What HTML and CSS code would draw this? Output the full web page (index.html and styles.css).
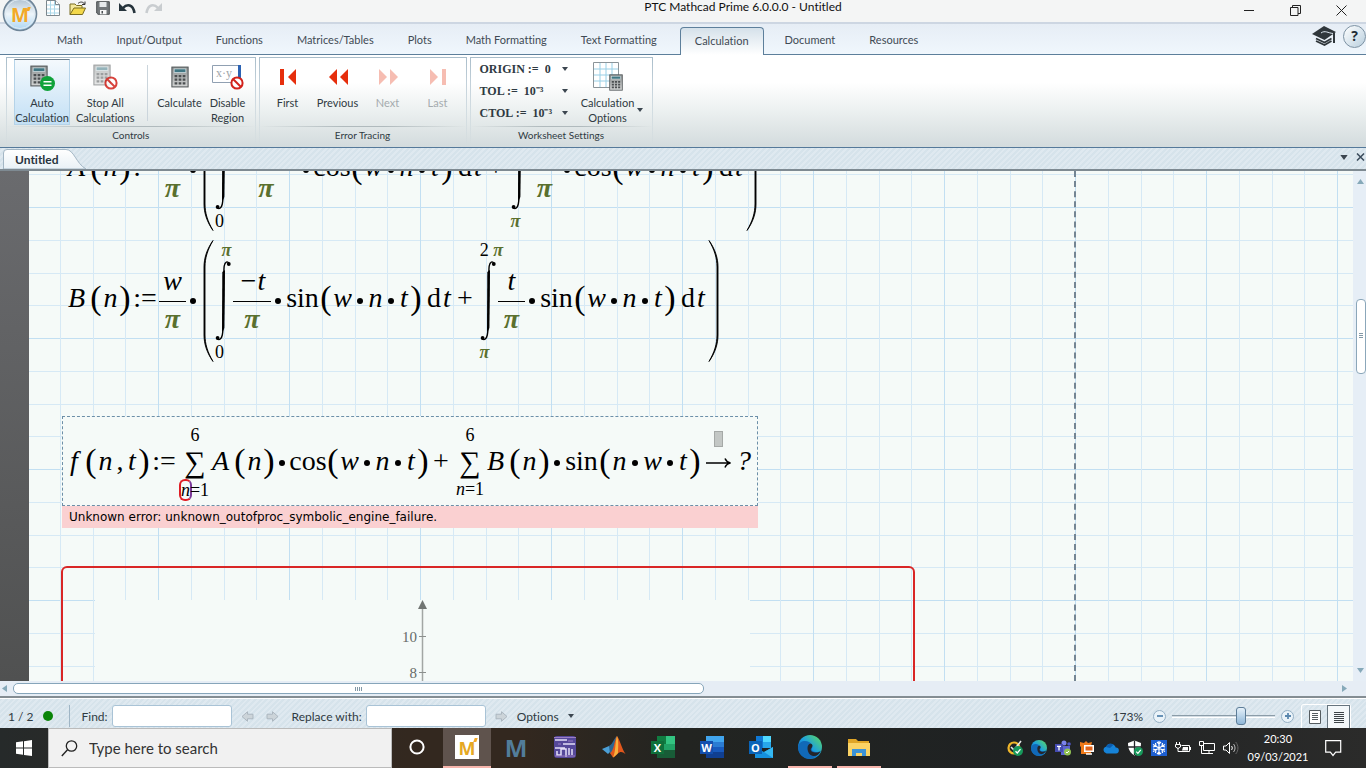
FILE: index.html
```html
<!DOCTYPE html>
<html lang="en">
<head>
    <meta charset="UTF-8">
    <meta name="viewport" content="width=device-width, initial-scale=1.0">
    <title>PTC Mathcad Prime 6.0.0.0 - Untitled</title>
    <link rel="stylesheet" href="styles.css">
</head>
<body>

    <!-- Shared symbols -->
    <svg class="defs" width="0" height="0" aria-hidden="true">
        <defs>
            <linearGradient id="calcFill" x1="0" y1="0" x2="0" y2="1"><stop offset="0" stop-color="#8d9191"/><stop offset="1" stop-color="#d3d5d5"/></linearGradient>
            <linearGradient id="edgeFill" x1="0" y1="1" x2="1" y2="0"><stop offset="0" stop-color="#0c59a4"/><stop offset=".5" stop-color="#1b9de2"/><stop offset="1" stop-color="#5fdf5a"/></linearGradient>
            <linearGradient id="orb" x1="0" y1="0" x2="0" y2="1"><stop offset="0" stop-color="#a9bccd"/><stop offset=".5" stop-color="#eef5fa"/><stop offset="1" stop-color="#a8d4f3"/></linearGradient>
            <linearGradient id="tabFill" x1="0" y1="0" x2="0" y2="1"><stop offset="0" stop-color="#ffffff"/><stop offset="1" stop-color="#e9f1f6"/></linearGradient>
        </defs>
        <symbol id="calc" viewBox="0 0 20 24">
            <rect x="1" y="1" width="18" height="22" fill="url(#calcFill)" stroke="#555a5c" stroke-width="1.2"/>
            <rect x="3.5" y="3" width="13" height="4" fill="#3f7683" stroke="#d8e3e5" stroke-width=".8"/>
            <path d="M4 11h3M8.500 11h3M13 11h3M4 15h3M8.500 15h3M13 15h3M4 19h3M8.500 19h3M13 19h3" stroke="#4b4f51" stroke-width="2.400"/>
        </symbol>
        <symbol id="ban" viewBox="0 0 14 14">
            <circle cx="7" cy="7" r="5.600" fill="#fff" stroke="#d2231c" stroke-width="2"/>
            <path d="M3 3l8 8" stroke="#d2231c" stroke-width="2"/>
        </symbol>
        <symbol id="edge" viewBox="0 0 24 24">
            <circle cx="12" cy="12" r="12" fill="url(#edgeFill)"/>
            <path d="M0 12C1 6 7 5 11 7c3 1.500 4 4 3 6.500-1 2 1 3.500 4 3.500 2 0 4-.5 5-1.500C20 22 14 24.500 9 23.500 3 22 0 17 0 12z" fill="#1169b8"/>
            <path d="M9.500 13c0-3 2-5 4-4 2 1.500.5 3-.5 4.500-1 2 1 3.800 4 4 3 .2 5-.5 6-2-2 4.500-5 6-8 5.500-3.500-.8-5.500-4-5.500-8z" fill="#24252a"/>
        </symbol>
        <symbol id="caret" viewBox="0 0 6 4"><path d="M0 0h6L3 4z" fill="#3c4650"/></symbol>
        <symbol id="arrow" viewBox="0 0 14 12"><path d="M1 3.500h6V.8L13 6l-6 5.200V8.500H1z" fill="#ccd4d9" stroke="#a9b4bc"/></symbol>
        <symbol id="tick" viewBox="0 0 10 10"><circle cx="5" cy="5" r="5" fill="#17985b"/><path d="M2.500 5.200l1.800 1.800 3.200-3.800" fill="none" stroke="#fff" stroke-width="1.300"/></symbol>
        <symbol id="integral" viewBox="0 0 16 82">
            <path d="M14 3.500C12.500.8 10 1.500 9.200 6 8.400 11 8.900 28 8.500 44c-.3 14 .2 25-1.200 31-.8 4-3 5.500-4.800 4" fill="none" stroke="#000" stroke-width="1.400"/>
            <path d="M10 10L9.400 68l-2.400 5L7.300 12z"/>
            <circle cx="13.800" cy="4" r="1.900"/><circle cx="2.600" cy="78" r="1.900"/>
        </symbol>
        <symbol id="bigparen" viewBox="0 0 12 122"><path d="M10 .5C4.500 10 2 18 2 27v68c0 9 2.500 17 8 26.500C4 113 1 104 1 95V27C1 18 4 9 10 .5z" fill="#000" stroke="#000" stroke-width=".9"/></symbol>
        <symbol id="bigparen-r" viewBox="0 0 12 122"><path d="M2 .5c5.500 9.500 8 17.500 8 26.500v68c0 9-2.500 17-8 26.500 6-8.500 9-17.500 9-26.500V27C11 18 8 9 2 .5z" fill="#000" stroke="#000" stroke-width=".9"/></symbol>
    </svg>

    <div class="app">

        <header class="titlebar">
            <button class="orb-btn" aria-label="Mathcad menu">
                <svg width="36" height="36" viewBox="0 0 36 36"><circle cx="18" cy="18" r="16.500" fill="url(#orb)" stroke="#6f8598" stroke-width="1.600"/><circle cx="18" cy="18" r="14.500" fill="none" stroke="#dfeaf2"/></svg>
                <span class="orb-m">M</span>
            </button>
            <div class="quick">
                <button aria-label="New"><svg width="14" height="16" viewBox="0 0 14 16"><path d="M.5.5h9l4 4v11H.5z" fill="#fff" stroke="#7d878d"/><path d="M1 5h12M1 9h12M1 13h12M4.500 1v14M8.500 1v14" stroke="#a9d6e8"/><path d="M9.500.5v4h4" fill="#fff" stroke="#7d878d"/></svg></button>
                <button aria-label="Open"><svg width="18" height="15" viewBox="0 0 18 15"><path d="M1 13.500V3h5l1.500 1.500H13V7" fill="#f5e99b" stroke="#7a6c20"/><path d="M1 13.500L5 7h11.500l-3 6.500z" fill="#f3d84b" stroke="#7a6c20"/><path d="M9 2.500c2-2 5-2 6.500.5M16 .5v3h-3" fill="none" stroke="#333"/></svg></button>
                <button aria-label="Save"><svg width="14" height="14" viewBox="0 0 14 14"><path d="M.7.7h12.600v12.600H2L.7 12z" fill="#73787b" stroke="#4a4f52"/><path d="M3.500 1h7v5h-7z" fill="#e7eaec"/><path d="M4 9h6.500v4.300H4z" fill="#f6f7f7"/><path d="M5.500 10h1.500v2.500H5.500z" fill="#4a4f52"/></svg></button>
                <button aria-label="Undo"><svg width="17" height="12" viewBox="0 0 17 12"><path d="M4 6c4-4.500 10-4 11.500 5" fill="none" stroke="#26343c" stroke-width="2.600"/><path d="M0 1v8h8z" fill="#26343c"/></svg></button>
                <button aria-label="Redo"><svg width="17" height="12" viewBox="0 0 17 12"><path d="M13 6C9 1.500 3 2 1.500 11" fill="none" stroke="#c9cdd0" stroke-width="2.600"/><path d="M17 1v8H9z" fill="#c9cdd0"/></svg></button>
            </div>
            <div class="app-title">PTC Mathcad Prime 6.0.0.0 - Untitled</div>
            <div class="window-btns">
                <button aria-label="Minimize"><svg width="11" height="11" viewBox="0 0 11 11"><path d="M0 5.500h10" stroke="#222"/></svg></button>
                <button aria-label="Restore"><svg width="11" height="11" viewBox="0 0 11 11"><path d="M.5 2.500h7.500v8H.5zM2.500 2.500v-2h8v8H8" fill="none" stroke="#222"/></svg></button>
                <button aria-label="Close"><svg width="11" height="11" viewBox="0 0 11 11"><path d="M.5.5l10 10M10.500.5l-10 10" stroke="#222"/></svg></button>
            </div>
        </header>

        <nav class="tabs">
            <button>Math</button>
            <button>Input/Output</button>
            <button>Functions</button>
            <button>Matrices/Tables</button>
            <button>Plots</button>
            <button>Math Formatting</button>
            <button>Text Formatting</button>
            <button class="active">Calculation</button>
            <button>Document</button>
            <button>Resources</button>
            <div class="tabs-right">
                <button class="icon-btn" aria-label="Learning"><svg width="26" height="20" viewBox="0 0 26 20"><path d="M13 0l12 6-11.500 8L1 8z" fill="#30373b"/><path d="M10 7c4-3 7 0 12 .5" fill="none" stroke="#dfe9f2"/><path d="M5 12.500l8.500 4 7-4M5 15l8.500 4 7-4" fill="none" stroke="#30373b" stroke-width="1.800"/><path d="M23 7v10" stroke="#30373b" stroke-width="2"/></svg></button>
                <button class="help" aria-label="Help">?</button>
            </div>
        </nav>

        <section class="ribbon">
            <div class="group">
                <div class="group-items">
                    <button class="tool pressed">
                        <span class="pic"><svg width="26" height="28" viewBox="0 0 26 28"><use href="#calc" x="1" y="0" width="18" height="24"/><circle cx="18.500" cy="19.500" r="7.500" fill="#10a23a"/><path d="M14.500 17.800h8M14.500 21.300h8" stroke="#fff" stroke-width="1.500"/></svg></span>
                        Auto<br>Calculation
                    </button>
                    <button class="tool">
                        <span class="pic"><svg width="26" height="28" viewBox="0 0 26 28"><g opacity=".55"><use href="#calc" x="1" y="0" width="18" height="24"/></g><g opacity=".85"><use href="#ban" x="12" y="13" width="14" height="14"/></g></svg></span>
                        Stop All<br>Calculations
                    </button>
                    <span class="divider"></span>
                    <button class="tool">
                        <span class="pic"><svg width="20" height="28" viewBox="0 0 20 28"><use href="#calc" x="1" y="2" width="18" height="24"/></svg></span>
                        Calculate
                    </button>
                    <button class="tool">
                        <span class="pic"><svg width="34" height="28" viewBox="0 0 34 28"><path d="M1.500 2.500h26v17h-26z" fill="#fff" stroke="#90a0b2"/><path d="M27 2h3v18h-3z" fill="#2c63b4"/><text x="5" y="14" font-size="12" fill="#a0a6aa" font-family="Liberation Serif">x·y</text><use href="#ban" x="19" y="13" width="14" height="14"/></svg></span>
                        Disable<br>Region
                    </button>
                </div>
                <div class="group-name">Controls</div>
            </div>

            <div class="group">
                <div class="group-items tracing">
                    <button class="tool"><span class="pic"><svg width="18" height="16" viewBox="0 0 18 16"><path d="M1 0h4v16H1zM17 0v16L9 8z" fill="#e62e0c"/></svg></span>First</button>
                    <button class="tool"><span class="pic"><svg width="20" height="16" viewBox="0 0 20 16"><path d="M9 0v16L1 8zM20 0v16l-8-8z" fill="#e62e0c"/></svg></span>Previous</button>
                    <button class="tool" disabled><span class="pic"><svg width="20" height="16" viewBox="0 0 20 16"><path d="M1 0v16l8-8zM12 0v16l8-8z" fill="#f6bdb2"/></svg></span>Next</button>
                    <button class="tool" disabled><span class="pic"><svg width="18" height="16" viewBox="0 0 18 16"><path d="M1 0v16l8-8zM13 0h4v16h-4z" fill="#f6bdb2"/></svg></span>Last</button>
                </div>
                <div class="group-name">Error Tracing</div>
            </div>

            <div class="group">
                <div class="group-items worksheet">
                    <div class="settings">
                        <div class="setting"><label for="origin">ORIGIN :=</label><select id="origin"><option>0</option></select><svg width="6" height="4"><use href="#caret"/></svg></div>
                        <div class="setting"><label for="tol">TOL :=</label><select id="tol"><option>10⁻³</option></select><svg width="6" height="4"><use href="#caret"/></svg></div>
                        <div class="setting"><label for="ctol">CTOL :=</label><select id="ctol"><option>10⁻³</option></select><svg width="6" height="4"><use href="#caret"/></svg></div>
                    </div>
                    <button class="tool options">
                        <span class="pic"><svg width="30" height="30" viewBox="0 0 30 30"><path d="M.5.5h25v25H.5z" fill="#fff" stroke="#8b9499"/><path d="M1 7h24M1 13h24M1 19h24M7 1v24M13 1v24M19 1v24" stroke="#98cfe6"/><use href="#calc" x="16" y="12" width="14" height="17"/></svg></span>
                        Calculation<br>Options
                        <svg class="drop" width="6" height="4"><use href="#caret"/></svg>
                    </button>
                </div>
                <div class="group-name">Worksheet Settings</div>
            </div>
        </section>

        <div class="docbar">
            <button class="doctab"><svg width="84" height="20" viewBox="0 0 84 20"><path d="M.5 20V4Q.5.5 4 .5h59c8 0 10 14 20 19.500z" fill="url(#tabFill)" stroke="#a3b6c4"/></svg><span>Untitled</span></button>
            <div class="docbar-btns">
                <button aria-label="Documents"><svg width="8" height="5" viewBox="0 0 6 4"><use href="#caret"/></svg></button>
                <button aria-label="Close document"><svg width="9" height="8" viewBox="0 0 9 8"><path d="M1 .5l7 7M8 .5l-7 7" stroke="#3c4c5c" stroke-width="1.500"/></svg></button>
            </div>
        </div>

        <main class="workspace">
            <div class="sheet">

                <!-- A(n) -->
                <div class="region region-a">
                    <div class="expr">
                        <i class="cap">A</i><b class="par">(</b><i class="n">n</i><b class="par">)</b><b class="def">:=</b>
                        <span class="frac"><span class="num"></span><i class="den pi">π</i></span>
                        <span class="dot"></span>
                        <svg class="open-par" width="12" height="122"><use href="#bigparen"/></svg>
                        <span class="int"><span class="lim up"></span><svg width="16" height="82"><use href="#integral"/></svg><span class="lim low">0</span></span>
                        <span class="frac wide"><span class="num"></span><i class="den pi">π</i></span>
                        <span class="dot"></span><b class="fn cos">cos</b><b class="par">(</b><i class="w">w</i><span class="dot"></span><i class="n">n</i><span class="dot"></span><i class="t">t</i><b class="par">)</b><b class="d">d</b><i class="dt">t</i><b class="plus">+</b>
                        <span class="int"><span class="lim up"></span><svg width="16" height="82"><use href="#integral"/></svg><i class="lim low pi">π</i></span>
                        <span class="frac mid"><span class="num"></span><i class="den pi">π</i></span>
                        <span class="dot"></span><b class="fn cos">cos</b><b class="par">(</b><i class="w">w</i><span class="dot"></span><i class="n">n</i><span class="dot"></span><i class="t">t</i><b class="par">)</b><b class="d">d</b><i class="dt">t</i>
                        <svg width="12" height="122"><use href="#bigparen-r"/></svg>
                    </div>
                </div>

                <!-- B(n) -->
                <div class="region region-b">
                    <div class="expr">
                        <i class="cap">B</i><b class="par">(</b><i class="n">n</i><b class="par">)</b><b class="def">:=</b>
                        <span class="frac"><i class="num">w</i><i class="den pi">π</i></span>
                        <span class="dot"></span>
                        <svg class="open-par" width="12" height="122"><use href="#bigparen"/></svg>
                        <span class="int"><i class="lim up pi">π</i><svg width="16" height="82"><use href="#integral"/></svg><span class="lim low">0</span></span>
                        <span class="frac neg"><i class="num">−t</i><i class="den pi">π</i></span>
                        <span class="dot"></span><b class="fn">sin</b><b class="par">(</b><i class="w">w</i><span class="dot"></span><i class="n">n</i><span class="dot"></span><i class="t">t</i><b class="par">)</b><b class="d">d</b><i class="dt">t</i><b class="plus">+</b>
                        <span class="int"><span class="lim up">2 <i class="pi">π</i></span><svg width="16" height="82"><use href="#integral"/></svg><i class="lim low pi">π</i></span>
                        <span class="frac"><i class="num">t</i><i class="den pi">π</i></span>
                        <span class="dot"></span><b class="fn">sin</b><b class="par">(</b><i class="w">w</i><span class="dot"></span><i class="n">n</i><span class="dot"></span><i class="t">t</i><b class="par">)</b><b class="d">d</b><i class="dt">t</i>
                        <svg width="12" height="122"><use href="#bigparen-r"/></svg>
                    </div>
                </div>

                <!-- f(n,t) with its error -->
                <div class="region region-f">
                    <div class="expr selected">
                        <i class="f">f</i><b class="par">(</b><i class="n">n</i><b class="comma">,</b><i class="t">t</i><b class="par">)</b><b class="def">:=</b>
                        <span class="sum"><span class="lim">6</span><b class="sigma">∑</b><span class="lim"><i class="bad">n</i>=1</span></span>
                        <i class="cap">A</i><b class="par">(</b><i class="n">n</i><b class="par">)</b><span class="dot"></span><b class="fn cos">cos</b><b class="par">(</b><i class="w">w</i><span class="dot"></span><i class="n">n</i><span class="dot"></span><i class="t">t</i><b class="par">)</b><b class="plus">+</b>
                        <span class="sum"><span class="lim">6</span><b class="sigma">∑</b><span class="lim"><i>n</i>=1</span></span>
                        <i class="cap">B</i><b class="par">(</b><i class="n">n</i><b class="par">)</b><span class="dot"></span><b class="fn">sin</b><b class="par">(</b><i class="n">n</i><span class="dot"></span><i class="w">w</i><span class="dot"></span><i class="t">t</i><b class="par">)</b>
                        <span class="eval"><span class="placeholder"></span><svg width="26" height="12" viewBox="0 0 26 12"><path d="M0 6h24M19 1.500c1 2.500 3 4 5.500 4.500-2.500.5-4.500 2-5.500 4.500" fill="none" stroke="#000" stroke-width="1.500"/></svg></span>
                        <i class="t">?</i>
                    </div>
                    <div class="error">Unknown error: unknown_outofproc_symbolic_engine_failure.</div>
                </div>

                <!-- Plot -->
                <div class="region plot">
                    <div class="plot-area">
                        <div class="ticks"><span>10</span><span>8</span></div>
                        <svg width="12" height="82" viewBox="0 0 12 82"><path d="M5.500 8v74" stroke="#a2a6a4" stroke-width="1.500"/><path d="M5.500 0L10 9H1z" fill="#717573"/><path d="M2 36.500h7M2 72.500h7" stroke="#8b8f8d"/></svg>
                    </div>
                </div>

                <div class="margin-line"></div>
            </div>
            <div class="vscroll">
                <svg width="7" height="5" viewBox="0 0 7 5"><path d="M0 5h7L3.500 0z" fill="#86a9b9"/></svg>
                <div class="vthumb"><svg width="4" height="6" viewBox="0 0 4 6"><path d="M0 .5h4M0 2.500h4M0 4.500h4" stroke="#8298a6"/></svg></div>
                <svg width="7" height="5" viewBox="0 0 7 5"><path d="M0 0h7L3.500 5z" fill="#86a9b9"/></svg>
            </div>
        </main>

        <div class="hscroll">
            <svg width="5" height="7" viewBox="0 0 5 7"><path d="M5 0v7L0 3.500z" fill="#86a9b9"/></svg>
            <div class="htrack"><div class="hthumb"><svg width="8" height="4" viewBox="0 0 8 4"><path d="M.5 0v4M2.500 0v4M4.500 0v4M6.500 0v4" stroke="#8298a6"/></svg></div></div>
            <svg width="5" height="7" viewBox="0 0 5 7"><path d="M0 0v7l5-3.500z" fill="#86a9b9"/></svg>
        </div>

        <footer class="statusbar">
            <span class="pages">1 / 2</span>
            <span class="led"></span>
            <span class="sep"></span>
            <label for="find">Find:</label>
            <input type="text" id="find">
            <button class="prev" aria-label="Find previous"><svg width="13" height="11"><use href="#arrow"/></svg></button>
            <button aria-label="Find next"><svg width="13" height="11"><use href="#arrow"/></svg></button>
            <label for="replace">Replace with:</label>
            <input type="text" id="replace">
            <button aria-label="Replace"><svg width="13" height="11"><use href="#arrow"/></svg></button>
            <button class="find-options">Options <svg width="6" height="4"><use href="#caret"/></svg></button>
            <div class="zoom">
                <label for="zoom">173%</label>
                <button class="round" aria-label="Zoom out"><svg width="8" height="8" viewBox="0 0 8 8"><path d="M1 4h6" stroke="#5a87ae" stroke-width="1.800"/></svg></button>
                <input type="range" id="zoom" min="0" max="100" value="69">
                <button class="round" aria-label="Zoom in"><svg width="8" height="8" viewBox="0 0 8 8"><path d="M1 4h6M4 1v6" stroke="#5a87ae" stroke-width="1.800"/></svg></button>
            </div>
            <div class="views">
                <button aria-label="Page view"><svg width="12" height="14" viewBox="0 0 12 14"><path d="M.5.5h11v13H.5z" fill="#fff" stroke="#555c60"/><path d="M3 3.500h6M3 5.500h6M3 7.500h6M3 9.500h6" stroke="#555c60"/></svg></button>
                <button class="on" aria-label="Draft view"><svg width="12" height="13" viewBox="0 0 12 13"><path d="M1 1.500h10M1 3.500h10M1 5.500h10M1 7.500h10M1 9.500h10M1 11.500h10" stroke="#3e4448"/></svg></button>
            </div>
        </footer>

        <div class="taskbar">
            <button class="start" aria-label="Start"><svg width="16" height="16" viewBox="0 0 16 16"><path d="M0 2.300L7 1.300V7.600H0zM8 1.200L16 0v7.600H8zM0 8.500h7v6.300l-7-1zM8 8.500h8V16l-8-1.100z" fill="#fff"/></svg></button>
            <div class="search">
                <svg width="17" height="17" viewBox="0 0 17 17"><circle cx="10.500" cy="6" r="5.200" fill="none" stroke="#222" stroke-width="1.300"/><path d="M6.500 9.800L.8 16" stroke="#222" stroke-width="1.400"/></svg>
                <input type="text" aria-label="Search" placeholder="Type here to search">
            </div>
            <div class="apps">
                <button class="cortana" aria-label="Cortana"><svg width="18" height="18" viewBox="0 0 18 18"><circle cx="9" cy="9" r="6.600" fill="none" stroke="#fff" stroke-width="2"/></svg></button>
                <button class="current" aria-label="Mathcad Prime"><span class="mc">M</span></button>
                <button aria-label="Mathcad"><span class="mc dark">M</span></button>
                <button aria-label="Circuit simulator"><svg width="22" height="22" viewBox="0 0 22 22"><rect width="22" height="22" rx="3" fill="#55489a"/><path d="M1 4h12M9 8h12M1 12h10M3 15v4h4v-6h5v8M15 12v7M18 13v6" fill="none" stroke="#e4def8" stroke-width="1.500"/><path d="M0 1.500h22M14 5h5M4 8h3M1 20h20" stroke="#9b7dc4"/></svg></button>
                <button aria-label="MATLAB"><svg width="24" height="22" viewBox="0 0 24 22"><path d="M0 13l7-3 3 4-4 4z" fill="#4b9fd6"/><path d="M7 10c4-2 5-8 8-10l-4 15-3 3z" fill="#2b6592"/><path d="M15 0c3 4 5 13 8.500 18-3-2-5-3-8 0-2 2-3 3-4.500 3.500L8 17c4-2 4-12 7-17z" fill="#e2571c"/><path d="M15 0c2 5 1 13 1 17-2 2-3.500 4-5 4.500C14 15 13 6 15 0z" fill="#f7b13c"/></svg></button>
                <button aria-label="Excel"><svg class="office" width="24" height="22" viewBox="0 0 24 22"><path d="M6 0h18v22H6z" fill="#21a366"/><path d="M6 0h9v8H6z" fill="#107c41"/><path d="M15 0h9v8h-9z" fill="#33c481"/><path d="M6 14h18v8H6z" fill="#185c37"/><path d="M0 5h13v13H0z" fill="#0f703b"/><text x="6.500" y="15.500" text-anchor="middle">X</text></svg></button>
                <button aria-label="Word"><svg class="office" width="24" height="22" viewBox="0 0 24 22"><path d="M6 0h18v6H6z" fill="#41a5ee"/><path d="M6 6h18v6H6z" fill="#2b7cd3"/><path d="M6 11h18v6H6z" fill="#185abd"/><path d="M6 16h18v6H6z" fill="#103f91"/><path d="M0 5h13v13H0z" fill="#144fae"/><text x="6.500" y="15.500" text-anchor="middle">W</text></svg></button>
                <button aria-label="Outlook"><svg class="office" width="24" height="22" viewBox="0 0 24 22"><path d="M7 0h15v12H7z" fill="#0f78d4"/><path d="M14 0h8v7h-8z" fill="#50d9ff"/><path d="M14 6h8v6h-8z" fill="#28a8ea"/><path d="M6 11l9 5 9-5v11H6z" fill="#1490df"/><path d="M15 16l9-5v11z" fill="#35b8f1"/><path d="M0 5h13v13H0z" fill="#0a64b8"/><text x="6.500" y="15.500" text-anchor="middle">O</text></svg></button>
                <button class="open" aria-label="Edge"><svg width="24" height="24"><use href="#edge"/></svg></button>
                <button class="open" aria-label="File Explorer"><svg width="22" height="19" viewBox="0 0 22 19"><path d="M0 1h8l2 2h11v5H0z" fill="#e0a526"/><path d="M0 5h22v13H0z" fill="#fbd365"/><path d="M4 18v-7h14v7h-4v-3H8v3z" fill="#3d93d6"/></svg></button>
            </div>
            <div class="tray">
                <svg width="16" height="16" viewBox="0 0 16 16"><circle cx="7" cy="8" r="5.500" fill="none" stroke="#f0b72a" stroke-width="2.200"/><path d="M4 7l3 3 7-9" fill="none" stroke="#e9e9e9" stroke-width="1.600"/><use href="#tick" x="6" y="6" width="10" height="10"/></svg>
                <svg width="16" height="16"><use href="#edge"/></svg>
                <svg width="16" height="16" viewBox="0 0 16 16"><circle cx="9" cy="3" r="2.500" fill="#7b83eb"/><circle cx="14" cy="4" r="1.800" fill="#5059c9"/><path d="M6 6h9v6l-3 3H6z" fill="#5c64cf"/><path d="M0 4h8v8H0z" fill="#444bb0"/><path d="M2 6.300h4M4 6v4.500" stroke="#fff" stroke-width="1.300"/><circle cx="12.500" cy="12" r="3.500" fill="#92c353"/><path d="M11 12l1 1 2-2" fill="none" stroke="#fff"/></svg>
                <svg width="16" height="16" viewBox="0 0 16 16"><path d="M1 2l4 1 2-2 2 2 4-1-1 4v8H2V7L1 6z" fill="#ef7a1a"/><path d="M5 5h10v7H5z" fill="#fff"/><path d="M6.500 6.500h7v4h-7z" fill="#e2641b"/><path d="M7 14h6" stroke="#fff" stroke-width="1.500"/></svg>
                <svg width="16" height="16" viewBox="0 0 16 16"><path d="M3.500 13.500a3.500 3.500 0 0 1-.5-6.800A5 5 0 0 1 11 5c1 .8 1.500 1.600 1.700 2.500a3 3 0 0 1 .3 6z" fill="#1683d8"/><path d="M3 7c1-3 4.500-4.500 7.500-2.300L7 8z" fill="#0a5cae"/></svg>
                <svg width="16" height="16" viewBox="0 0 16 16"><path d="M7.500.5L14 3c0 6-2 10-6.500 12.500C3 13 1 9 1 3z" fill="#fff"/><path d="M7.500.5V15M1 7h13" stroke="#24262a" stroke-width="1.300"/><use href="#tick" x="7" y="7" width="9" height="9"/></svg>
                <svg width="16" height="16" viewBox="0 0 16 16"><path d="M0 0h16v16H0z" fill="#1d5fd1"/><path d="M8 1v14M2 4.500l12 7M14 4.500l-12 7M6 2l2 2 2-2M6 14l2-2 2 2M2 7l3-1-.5-3M14 9l-3 1 .5 3M2 9l3 1-.5 3M14 7l-3-1 .5-3" fill="none" stroke="#fff" stroke-width="1.200"/></svg>
                <svg width="16" height="14" viewBox="0 0 16 14"><path d="M6.500 4.500h8v6h-9M15.500 6v3" fill="none" stroke="#fff"/><path d="M8 6h5v3.500H7z" fill="#fff"/><path d="M1.500 1v2M4.500 1v2M.5 3.500h5v2.500L3 7.500.5 6zM3 7v3.500h3" fill="none" stroke="#fff"/></svg>
                <svg width="16" height="14" viewBox="0 0 16 14"><path d="M4.500 2.500h11v7h-11zM10 9.500v3M6 12.500h8M.5.500h4v4h-4zM2.500 4.500v8h4" fill="none" stroke="#fff"/></svg>
                <svg width="16" height="14" viewBox="0 0 16 14"><path d="M.5 5h2.500l3.500-3.500v11L3 9H.5z" fill="none" stroke="#fff"/><path d="M8.500 5c1 1.200 1 2.800 0 4" fill="none" stroke="#fff"/><path d="M10.500 3c2 2.500 2 5.500 0 8" fill="none" stroke="#bbb"/><path d="M12.700 1c3 3.500 3 8.500 0 12" fill="none" stroke="#666"/></svg>
            </div>
            <div class="clock"><span>20:30</span><span>09/03/2021</span></div>
            <button class="notify" aria-label="Notifications"><svg width="17" height="17" viewBox="0 0 17 17"><path d="M.7.7h15v11.500h-5L8 15.500l-2.700-3.300H.7z" fill="none" stroke="#fff" stroke-width="1.200"/></svg></button>
        </div>
    </div>

</body>
</html>
```
FILE: styles.css
```css
* {
    box-sizing: border-box;
}
body {
    margin: 0;
    font-family: Lato, "Open Sans", sans-serif;
    font-size: 12px;
    font-variant-ligatures: none;
    color: #2f3a42;
}
button {
    border: none;
    background: none;
    padding: 0;
    margin: 0;
    font: inherit;
    color: inherit;
}
svg {
    display: block;
    flex-shrink: 0;
}
.defs {
    position: absolute;
}
.app {
    display: flex;
    flex-direction: column;
    height: 100vh;
    overflow: hidden;
    background: #dbe6ee;
}

/* Title bar */
.titlebar {
    position: relative;
    display: flex;
    flex-shrink: 0;
    align-items: flex-start;
    justify-content: space-between;
    height: 24px;
    background: #f4f5f5;
    border-bottom: 2px solid #cdd6e2;
}
.orb-btn {
    position: absolute;
    left: 2px;
    top: -4px;
    z-index: 2;
}
.orb-m {
    position: absolute;
    left: 9px;
    top: 9px;
    font: bold 19px/20px "Open Sans", sans-serif;
    color: #f3a928;
}
/* apostrophe mark of the M logo */
.orb-m::after,
.mc::after {
    content: "";
    position: absolute;
    right: -1px;
    top: 2px;
    width: 3px;
    height: 4px;
    background: #f3a928;
    transform: skewX(-20deg);
}
.quick {
    display: flex;
    align-items: center;
    gap: 9px;
    height: 16px;
    padding-left: 46px;
}
.app-title {
    position: absolute;
    left: 0;
    right: 0;
    padding-left: 120px;
    text-align: center;
    line-height: 14px;
    color: #111;
}
.window-btns {
    display: flex;
    gap: 35px;
    padding: 5px 19px 0 0;
}

/* Ribbon tabs */
.tabs {
    display: flex;
    flex-shrink: 0;
    align-items: flex-end;
    height: 31px;
    padding-left: 40px;
    background: linear-gradient(#e6edf5, #f0f7fd);
    border-bottom: 1px solid #5d7f9b;
    font-size: 11px;
    color: #3f4a54;
}
.tabs > button {
    height: 28px;
    padding: 0 16px 2px;
    border: 1px solid transparent;
    border-bottom: none;
    border-radius: 4px 4px 0 0;
}
.tabs .active {
    margin: 0 4px -1px 6px;
    padding: 0 14px 2px;
    border-color: #5d7f9b;
    background: linear-gradient(#d5e1ea, #fff);
}
.tabs-right {
    display: flex;
    align-items: center;
    gap: 6px;
    height: 30px;
    margin-left: auto;
    padding-bottom: 6px;
}
.help {
    width: 23px;
    height: 23px;
    border: 1px solid #7d92a3;
    border-radius: 50%;
    background: linear-gradient(135deg, #fff, #b9cfde);
    font: bold 14px/20px "Open Sans", sans-serif;
    color: #222c35;
}

/* Ribbon */
.ribbon {
    display: flex;
    flex-shrink: 0;
    gap: 3px;
    height: 93px;
    padding: 2px 6px 3px;
    background: linear-gradient(#fff 30%, #e9eeee 65%, #d3dbdd);
    border-bottom: 1px solid #55799a;
    font-size: 11px;
}
.group {
    display: flex;
    flex-direction: column;
    border: 1px solid #b9c7d1;
    border-bottom: none;
    border-image: linear-gradient(#a9bdca, transparent) 1;
}
.group-items {
    display: flex;
    flex: 1;
    align-items: flex-start;
    padding: 1px 3px 0 7px;
}
.group-name {
    height: 18px;
    line-height: 16px;
    text-align: center;
    font-size: 10px;
    border-top: 1px solid;
    border-image: linear-gradient(90deg, transparent, #b0babd 40%, #b0babd 60%, transparent) 1;
}
.tool {
    position: relative;
    display: block;
    min-width: 48px;
    line-height: 15px;
    text-align: center;
}
.tool:disabled {
    color: #a5abae;
}
.tool .pic {
    display: flex;
    align-items: center;
    justify-content: center;
    height: 36px;
}
.tool.pressed {
    min-width: 56px;
    height: 66px;
    border: 1px solid #b5d3e8;
    border-top: 1px solid #6e7f8c;
    background: linear-gradient(#f4f9fd, #c3e0f5);
}
.tool.pressed .pic {
    height: 35px;
}
.divider {
    width: 1px;
    height: 56px;
    margin: 6px 8px 0 12px;
    background: #cbd5dc;
}
.group .pressed + .tool {
    margin-left: 6px;
}
.tracing {
    gap: 2px;
    padding: 1px 4px 0;
}
.worksheet {
    padding: 1px 13px 0 7px;
}
.settings {
    display: flex;
    flex-direction: column;
    gap: 6px;
    width: 90px;
    padding: 2px 0 0 2px;
}
.setting {
    display: flex;
    align-items: center;
    height: 16px;
    font: bold 12px "Liberation Serif", serif;
}
.setting select {
    flex: 1;
    width: 10px;
    padding: 0 0 0 6px;
    appearance: none;
    border: none;
    background: none;
    font: inherit;
    color: inherit;
}
.options {
    margin-left: 9px;
    width: 62px;
}
.options .drop {
    position: absolute;
    right: -4px;
    top: 49px;
}

/* Document tabs */
.docbar {
    display: flex;
    flex-shrink: 0;
    align-items: flex-end;
    justify-content: space-between;
    height: 23px;
    padding: 0 1px 0 3px;
    background: repeating-linear-gradient(135deg, #d6e3eb 0 2px, #dfe9f0 2px 4px);
    border-bottom: 2px solid #7e8a92;
}
.doctab {
    position: relative;
    width: 84px;
    height: 20px;
    padding-left: 12px;
    text-align: left;
    font-weight: bold;
    color: #27333d;
}
.doctab svg {
    position: absolute;
    left: 0;
    top: 0;
}
.doctab span {
    position: relative;
}
.docbar-btns {
    display: flex;
    gap: 8px;
    padding-bottom: 8px;
}

/* Worksheet */
.workspace {
    display: flex;
    flex: 1;
    min-height: 0;
    padding-left: 29px;
    background: linear-gradient(#6a6b6e, #505151);
}
.sheet {
    position: relative;
    flex: 1;
    overflow: hidden;
    background-color: #f5faf8;
    background-image:
        repeating-linear-gradient(90deg, #c2dff2 0 1px, transparent 1px 33px, #d6e9f5 33px 34px, transparent 34px 66px, #d6e9f5 66px 67px, transparent 67px 98px, #d6e9f5 98px 99px, transparent 99px 131px),
        repeating-linear-gradient(#c2dff2 0 1px, transparent 1px 33px, #d6e9f5 33px 34px, transparent 34px 66px, #d6e9f5 66px 67px, transparent 67px 98px, #d6e9f5 98px 99px, transparent 99px 131px);
    background-size: 131px 100%, 100% 131px;
    background-position: -2px 0, 0 36px;
}
.margin-line {
    position: absolute;
    left: 1045px;
    top: 0;
    bottom: 0;
    border-left: 2px dashed #748593;
}
.region {
    position: absolute;
    font-family: "Liberation Serif", serif;
    color: #000;
}
.region-a {
    left: 39px;
    top: -62px;
}
.region-b {
    left: 39px;
    top: 69px;
}
.region-f {
    left: 33px;
    top: 245px;
}
.expr {
    display: flex;
    align-items: center;
    font-size: 28px;
    line-height: 28px;
    white-space: nowrap;
}
.expr b {
    font-weight: normal;
}
.expr > i,
.expr > b {
    padding-bottom: 7px;
    text-align: center;
}
.selected > i,
.selected > b {
    padding-bottom: 4px;
}
.expr > .cap {
    width: 22px;
    text-align: left;
}
.expr .par {
    width: 12px;
    font-size: 34px;
}
.expr .n {
    width: 17px;
}
.expr .w {
    width: 21px;
}
.expr .t {
    width: 12px;
}
.expr > .f {
    width: 15px;
    text-align: left;
}
.expr .comma {
    width: 12px;
}
.expr .def {
    width: 28px;
}
.expr .plus {
    width: 24px;
}
.expr .fn {
    width: 35px;
}
.expr .cos {
    width: 38px;
}
.expr > .d {
    width: 19px;
    text-align: right;
}
.expr .dt {
    width: 12px;
}
.open-par {
    margin: 0 -3px 0 3px;
}
.dot {
    width: 6px;
    height: 6px;
    margin: 0 4px;
    border-radius: 50%;
    background: #000;
}
.pi {
    font-weight: bold;
    color: #5a702e;
}
.frac {
    display: flex;
    flex-direction: column;
    width: 27px;
    text-align: center;
}
.frac.neg {
    width: 38px;
}
.frac.wide {
    width: 66px;
}
.frac.mid {
    width: 31px;
}
.num {
    height: 35px;
    border-bottom: 1px solid #000;
}
.den {
    height: 34px;
    padding-top: 3px;
}
.int {
    display: flex;
    flex-direction: column;
    align-items: center;
    width: 21px;
}
.lim {
    height: 20px;
    font-size: 18px;
    line-height: 20px;
}
.lim.up {
    margin-left: 8px;
}
.lim.low {
    margin-right: 6px;
}
.sum {
    display: flex;
    flex-direction: column;
    align-items: center;
    width: 34px;
    margin-top: -2px;
}
.sigma {
    font-size: 30px;
    line-height: 34px;
}
.bad {
    display: inline-block;
    border: 2px solid #e01c24;
    border-right-color: #7a3a9a;
    border-radius: 6px;
    margin: 0 -2px;
    line-height: 18px;
}
.selected {
    height: 90px;
    padding: 3px 8px 0 7px;
    background: #f5faf8;
    border: 1px dashed #6c8fa8;
}
.eval {
    position: relative;
    padding: 0 5px;
}
.placeholder {
    position: absolute;
    left: 13px;
    top: -26px;
    width: 9px;
    height: 16px;
    background: #c3c7c5;
    border: 1px solid #a5a9a7;
}
.error {
    height: 22px;
    padding-left: 7px;
    background: #fad0d1;
    font: 12px/22px "DejaVu Sans", sans-serif;
}
.plot {
    left: 32px;
    top: 395px;
    width: 854px;
    height: 140px;
    padding: 32px 0 0 32px;
    border: 2px solid #d92626;
    border-radius: 6px;
}
.plot-area {
    display: flex;
    width: 655px;
    height: 110px;
    padding-left: 306px;
    background: #f5faf8;
}
.ticks {
    width: 16px;
    padding-top: 28px;
    text-align: right;
    font-size: 15px;
    line-height: 18px;
    color: #666a68;
}
.ticks span {
    display: block;
    margin-bottom: 18px;
}

/* Scrollbars */
.vscroll {
    display: flex;
    flex-direction: column;
    align-items: center;
    justify-content: space-between;
    width: 13px;
    padding: 8px 0 8px 2px;
    background: #e6eef6;
}
.vthumb {
    display: flex;
    align-items: center;
    justify-content: center;
    width: 10px;
    height: 75px;
    margin-bottom: 180px;
    border: 1px solid #8ba7ba;
    border-radius: 4px;
    background: #fff;
}
.hscroll {
    display: flex;
    flex-shrink: 0;
    align-items: center;
    height: 17px;
    padding: 0 19px 0 2px;
    background: #e6edf5;
    border-bottom: 2px solid #848d93;
}
.htrack {
    flex: 1;
    padding-left: 6px;
}
.hthumb {
    display: flex;
    align-items: center;
    justify-content: center;
    width: 52%;
    height: 11px;
    border: 1px solid #86a5ba;
    border-radius: 5px;
    background: #fff;
}

/* Status bar */
.statusbar {
    display: flex;
    flex-shrink: 0;
    align-items: center;
    height: 30px;
    padding: 5px 15px 0 8px;
    background: repeating-linear-gradient(135deg, #d6e3eb 0 2px, #dfe9f0 2px 4px);
    border-top: 1px solid #fff;
}
.led {
    width: 10px;
    height: 10px;
    margin: 0 16px 0 9px;
    border-radius: 50%;
    background: #0a8408;
}
.sep {
    width: 1px;
    height: 22px;
    margin-right: 12px;
    background: #9fb5c5;
}
.statusbar input[type=text] {
    width: 120px;
    height: 22px;
    margin: 0 9px 0 4px;
    border: 1px solid #a9c3d6;
    border-radius: 3px;
    background: #fff;
}
.statusbar .prev {
    margin-right: 12px;
    transform: scaleX(-1);
}
.statusbar .prev + button {
    margin-right: 13px;
}
.find-options {
    display: flex;
    align-items: center;
    gap: 9px;
    margin-left: 9px;
}
.zoom {
    display: flex;
    align-items: center;
    gap: 6px;
    margin-left: auto;
}
.zoom label {
    margin-right: 4px;
}
.round {
    display: flex;
    align-items: center;
    justify-content: center;
    width: 13px;
    height: 13px;
    border: 1px solid #95b0c5;
    border-radius: 50%;
    background: #eaf3f9;
}
.zoom input {
    width: 103px;
    height: 20px;
    margin: 0;
    appearance: none;
    background: none;
}
.zoom input::-webkit-slider-runnable-track {
    height: 3px;
    border-top: 1px solid #8b9ca8;
    border-bottom: 1px solid #fff;
    background: #d3dde4;
}
.zoom input::-webkit-slider-thumb {
    appearance: none;
    width: 10px;
    height: 18px;
    margin-top: -9px;
    border: 1px solid #5d7d98;
    border-radius: 3px;
    background: linear-gradient(#e5f1fa, #8fb7d8);
}
.views {
    display: flex;
    align-self: flex-end;
    margin-left: 7px;
    border: 1px solid #fff;
    border-bottom: none;
    border-radius: 3px 3px 0 0;
}
.views button {
    display: flex;
    align-items: center;
    justify-content: center;
    width: 25px;
    height: 23px;
}
.views .on {
    width: 23px;
    background: #f4f8fa;
    border: 1px solid #66747e;
    border-bottom: none;
}

/* Taskbar */
.taskbar {
    display: flex;
    flex-shrink: 0;
    height: 40px;
    background: linear-gradient(90deg, #262a2a 0, #33281f 30%, #33281f 38%, #222421 50%, #1f2223 75%, #2b2b2a 100%);
    color: #fff;
}
.start {
    display: flex;
    align-items: center;
    justify-content: center;
    width: 48px;
}
.search {
    display: flex;
    align-items: center;
    gap: 11px;
    width: 344px;
    padding-left: 12px;
    background: #f1f1f1;
    border: 1px solid #bbb;
}
.search input {
    flex: 1;
    min-width: 0;
    border: none;
    padding: 0;
    background: none;
    font: 15px Lato, sans-serif;
}
.search input::placeholder {
    color: #333;
}
.apps {
    display: flex;
    gap: 1px;
}
.apps button {
    display: flex;
    align-items: center;
    justify-content: center;
    width: 48px;
    border-bottom: 2px solid transparent;
}
.apps .cortana {
    width: 50px;
}
.apps .current {
    background: #5f534d;
    border-color: #f7b5ac;
}
.apps .open {
    border-image: linear-gradient(90deg, transparent 8%, #f7b5ac 8% 92%, transparent 92%) 2;
}
.mc {
    position: relative;
    width: 24px;
    height: 24px;
    background: #fff;
    font: bold 18px/26px "Open Sans", sans-serif;
    color: #e5a823;
}
.mc::after {
    right: 2px;
    top: 3px;
}
.mc.dark {
    background: none;
    font-size: 24px;
    color: #527d9a;
}
.mc.dark::after {
    display: none;
}
.office text {
    font: bold 11px "Open Sans", sans-serif;
    fill: #fff;
}
.tray {
    display: flex;
    align-items: center;
    gap: 8px;
    margin-left: auto;
}
.clock {
    display: flex;
    flex-direction: column;
    justify-content: center;
    width: 78px;
    text-align: center;
    font-size: 11px;
    line-height: 18px;
}
.notify {
    width: 49px;
    padding-left: 8px;
}
```
